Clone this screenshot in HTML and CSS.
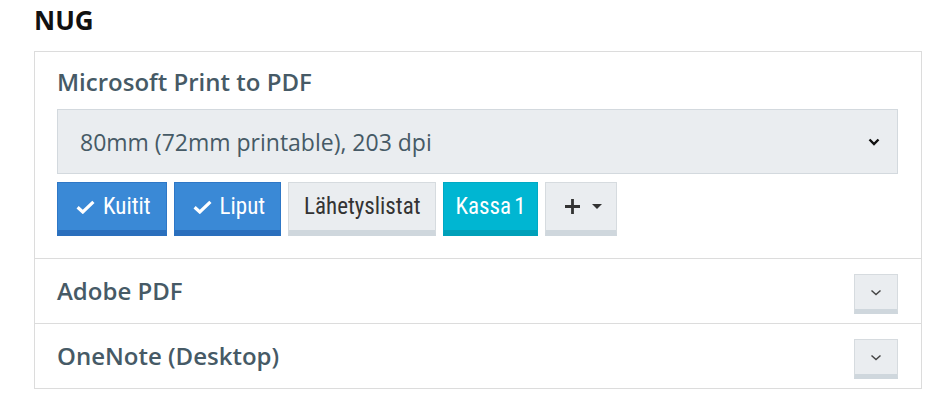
FILE: index.html
```html
<!DOCTYPE html>
<html lang="fi">
<head>
<meta charset="utf-8">
<title>NUG</title>
<link rel="stylesheet" href="styles.css">
</head>
<body>
<div class="page">
  <h1 class="heading">NUG</h1>
  <div class="panel">
    <section class="printer printer--open">
      <div class="printer__title">Microsoft Print to PDF</div>
      <div class="select">
        <span class="select__value">80mm (72mm printable), 203 dpi</span>
        <svg class="select__chevron" width="12" height="8" viewBox="0 0 12 8"><path d="M1.5 1.5 L6 6 L10.5 1.5" fill="none" stroke="#111" stroke-width="2.4"/></svg>
      </div>
      <div class="tags">
        <button class="btn btn--blue"><svg class="btn__check" width="19" height="14" viewBox="0 0 19 14"><path d="M1.6 7.2 L6.8 12 L17.4 1.8" fill="none" stroke="#fff" stroke-width="3.2"/></svg>Kuitit</button>
        <button class="btn btn--blue"><svg class="btn__check" width="19" height="14" viewBox="0 0 19 14"><path d="M1.6 7.2 L6.8 12 L17.4 1.8" fill="none" stroke="#fff" stroke-width="3.2"/></svg>Liput</button>
        <button class="btn btn--gray">Lähetyslistat</button>
        <button class="btn btn--cyan btn--kassa">Kassa 1</button>
        <button class="btn btn--gray btn--add"><svg width="17" height="17" viewBox="0 0 17 17"><path d="M8.5 1 V16 M1 8.5 H16" stroke="#333" stroke-width="2.8"/></svg><span class="caret"></span></button>
      </div>
    </section>
    <section class="printer">
      <div class="printer__title">Adobe PDF</div>
      <button class="toggle"><svg width="12" height="7" viewBox="0 0 12 7"><path d="M1.5 1.5 L6 5.5 L10.5 1.5" fill="none" stroke="#444" stroke-width="1.5"/></svg></button>
    </section>
    <section class="printer">
      <div class="printer__title">OneNote (Desktop)</div>
      <button class="toggle"><svg width="12" height="7" viewBox="0 0 12 7"><path d="M1.5 1.5 L6 5.5 L10.5 1.5" fill="none" stroke="#444" stroke-width="1.5"/></svg></button>
    </section>
  </div>
</div>
</body>
</html>
```
FILE: styles.css
```css
* { box-sizing: border-box; }
body {
  margin: 0;
  background: #fff;
  font-family: "Open Sans", "Noto Sans", sans-serif;
}
.page {
  padding: 0 4px 0 34px;
}
.heading {
  margin: 0;
  padding-top: 3px;
  height: 51px;
  font-size: 26px;
  font-weight: 700;
  line-height: 34px;
  color: #111;
}
.panel {
  border: 1px solid #dcdcdc;
}
.printer {
  display: flex;
  align-items: flex-start;
  justify-content: space-between;
  padding: 15px 23px 9px 22px;
  border-top: 1px solid #dcdcdc;
}
.printer:first-child { border-top: 0; }
.printer--open {
  display: block;
  padding: 15px 23px 22px 22px;
}
.printer .printer__title { padding-top: 2px; }
.printer--open .printer__title { padding-top: 0; }
.printer__title {
  font-size: 24px;
  font-weight: 600;
  line-height: 30px;
  color: #465a66;
}
.select {
  margin-top: 12px;
  height: 65px;
  display: flex;
  align-items: center;
  justify-content: space-between;
  padding: 0 17px 0 22px;
  background: #eaedf0;
  border: 1px solid #d3d9de;
  font-size: 23px;
  color: #465a66;
}
.tags {
  display: flex;
  gap: 7px;
  margin-top: 8px;
}
.btn {
  height: 54px;
  display: inline-flex;
  align-items: center;
  flex-shrink: 0;
  padding: 0 15px;
  border: 1px solid transparent;
  border-bottom-width: 6px;
  font-family: "Roboto Condensed", "DejaVu Sans Condensed", "Liberation Sans Narrow", Roboto, sans-serif;
  font-stretch: condensed;
  font-size: 23px;
  font-weight: 400;
  cursor: pointer;
}
.btn__check {
  flex-shrink: 0;
  margin: 0 8px 0 2px;
}
.btn--blue {
  padding: 0 15px 0 16px;
  background: #3a89d6;
  border-color: #2e77c6;
  border-bottom-color: #2a6fbd;
  color: #fff;
}
.btn--gray {
  background: #eaedf0;
  border-color: #d6dbdf;
  border-bottom-color: #cfd7dd;
  color: #333;
}
.btn--cyan {
  background: #00b6d2;
  border-color: #00a9c4;
  border-bottom-color: #00a0b9;
  color: #fff;
}
.btn--kassa {
  padding: 0 11px;
  word-spacing: -2px;
}
.btn--add {
  padding: 0 14px 0 18px;
  gap: 11px;
}
.caret {
  width: 0;
  height: 0;
  border-left: 5px solid transparent;
  border-right: 5px solid transparent;
  border-top: 5px solid #333;
}
.toggle {
  width: 44px;
  height: 40px;
  display: flex;
  align-items: center;
  justify-content: center;
  background: #eaedf0;
  border: 1px solid #d6dbdf;
  border-bottom: 5px solid #cfd7dd;
  padding: 0;
  cursor: pointer;
}
```
